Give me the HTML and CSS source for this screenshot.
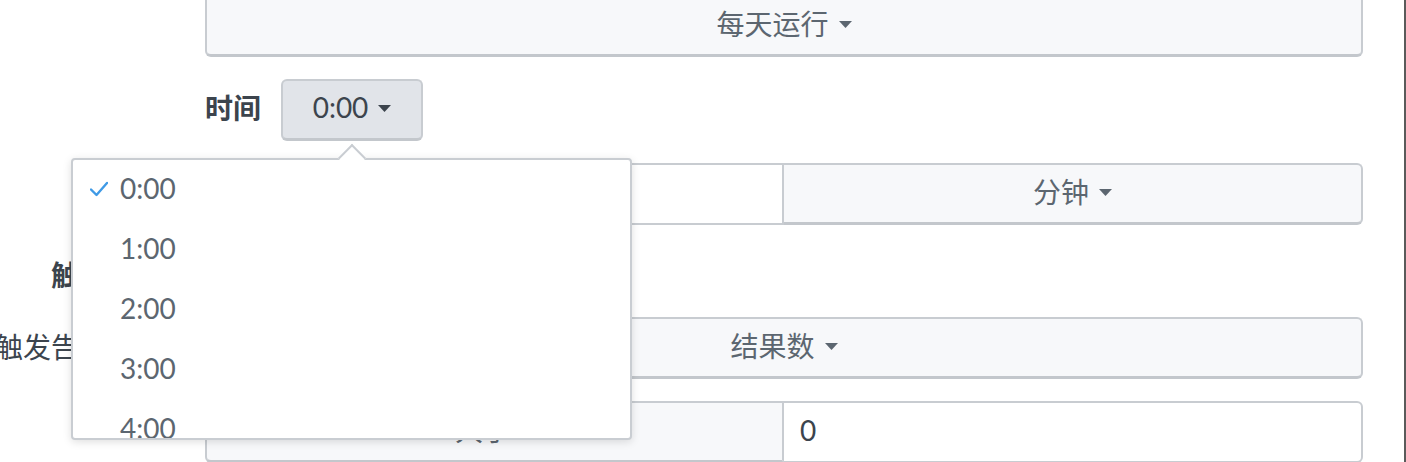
FILE: index.html
```html
<!DOCTYPE html>
<html lang="zh">
<head>
<meta charset="utf-8">
<link rel="stylesheet" href="styles.css">
</head>
<body>
<div class="frame">
  <div class="form">
    <div class="label"></div>
    <div class="ctrl">
      <button class="btn">每天运行<svg class="caret" width="13" height="7" viewBox="0 0 13 7"><path d="M0 0H13L6.5 7Z"/></svg></button>
    </div>

    <div class="label"></div>
    <div class="ctrl inline">
      <span class="inline-label">时间</span>
      <button class="btn btn-time">0:00<svg class="caret" width="13" height="7" viewBox="0 0 13 7"><path d="M0 0H13L6.5 7Z"/></svg></button>
    </div>

    <div class="label"></div>
    <div class="ctrl split">
      <div class="input input-left"></div>
      <button class="btn btn-right">分钟<svg class="caret" width="13" height="7" viewBox="0 0 13 7"><path d="M0 0H13L6.5 7Z"/></svg></button>
    </div>

    <div class="label heading">触发条件</div>
    <div class="ctrl"></div>

    <div class="label">触发告警条件</div>
    <div class="ctrl">
      <button class="btn">结果数<svg class="caret" width="13" height="7" viewBox="0 0 13 7"><path d="M0 0H13L6.5 7Z"/></svg></button>
    </div>

    <div class="label"></div>
    <div class="ctrl split">
      <button class="btn btn-left">大于<svg class="caret" width="13" height="7" viewBox="0 0 13 7"><path d="M0 0H13L6.5 7Z"/></svg></button>
      <div class="input input-right">0</div>
    </div>
  </div>
  <div class="edge"></div>
</div>

<div class="popover">
  <ul class="menu">
    <li class="item"><span class="check"><svg width="18" height="16" viewBox="0 0 18 16"><polyline points="1,8.5 6.5,14 17,2" fill="none" stroke="#3f9ae6" stroke-width="2.4" stroke-linecap="round" stroke-linejoin="round"/></svg></span>0:00</li>
    <li class="item"><span class="check"></span>1:00</li>
    <li class="item"><span class="check"></span>2:00</li>
    <li class="item"><span class="check"></span>3:00</li>
    <li class="item"><span class="check"></span>4:00</li>
  </ul>
</div>
</body>
</html>
```

FILE: styles.css
```css
html, body {
  margin: 0;
  padding: 0;
}

body {
  width: 1406px;
  height: 462px;
  overflow: hidden;
  position: relative;
  background: #ffffff;
  font-family: Lato, "Noto Sans CJK SC", sans-serif;
  font-size: 28px;
  color: #3c444d;
}

.frame {
  display: flex;
  height: 462px;
}

.form {
  flex: 1;
  display: grid;
  grid-template-columns: 163px 1158px;
  grid-template-rows: 62px 62px 62px 48px 62px 62px;
  column-gap: 42px;
  row-gap: 22px;
  align-content: start;
  margin-top: -5px;
}

.edge {
  width: 2px;
  background: #5a5a5a;
}

.label {
  display: flex;
  align-items: center;
  justify-content: flex-end;
  white-space: nowrap;
  color: #3c444d;
  padding-bottom: 5px;
}

.label.heading {
  font-weight: 700;
  padding-top: 8px;
  padding-bottom: 2px;
}

.ctrl {
  display: flex;
}

.ctrl.inline {
  align-items: center;
}

.inline-label {
  font-weight: 700;
  margin-right: 20px;
  white-space: nowrap;
  padding-bottom: 6px;
}

.btn {
  font: inherit;
  display: flex;
  align-items: center;
  justify-content: center;
  width: 100%;
  height: 62px;
  box-sizing: border-box;
  padding: 0 0 5px 0;
  margin: 0;
  background: #f7f8fa;
  border: 2px solid #c8ccd1;
  border-bottom: 3px solid #c3c7cc;
  border-radius: 6px;
  color: #5c6670;
}

.caret {
  margin-left: 10px;
  margin-top: 2px;
  fill: #5c6670;
}

.btn-time {
  width: 142px;
  background: #e1e4e9;
  color: #3c444d;
}

.btn-time .caret {
  fill: #3c444d;
}

.split {
  display: grid;
  grid-template-columns: 579px 579px;
}

.input {
  box-sizing: border-box;
  height: 62px;
  background: #ffffff;
  border: 2px solid #c8ccd1;
  display: flex;
  align-items: center;
  padding: 0 0 4px 16px;
  color: #3c444d;
}

.input-left {
  border-radius: 6px 0 0 6px;
}

.btn-right {
  border-left: none;
  border-radius: 0 6px 6px 0;
}

.btn-left {
  border-radius: 6px 0 0 6px;
}

.input-right {
  border-left: none;
  border-radius: 0 6px 6px 0;
}

.popover {
  position: absolute;
  left: 71px;
  top: 158px;
  width: 561px;
  height: 282px;
  box-sizing: border-box;
  background: #ffffff;
  border: 2px solid #c9cdd2;
  border-radius: 4px;
  box-shadow: 0 2px 8px rgba(0, 0, 0, 0.13);
  z-index: 10;
}

.popover::before {
  content: "";
  position: absolute;
  left: 269px;
  top: -12px;
  width: 20px;
  height: 20px;
  box-sizing: border-box;
  background: #ffffff;
  border-top: 2px solid #c9cdd2;
  border-left: 2px solid #c9cdd2;
  transform: rotate(45deg);
}

.menu {
  list-style: none;
  margin: 0;
  padding: 0;
  height: 100%;
  overflow: hidden;
  position: relative;
}

.item {
  height: 60px;
  box-sizing: border-box;
  display: flex;
  align-items: center;
  padding: 0 0 4px 17px;
  color: #5c6670;
}

.check {
  width: 18px;
  height: 16px;
  margin-right: 12px;
  margin-top: 2px;
  display: flex;
}
```
